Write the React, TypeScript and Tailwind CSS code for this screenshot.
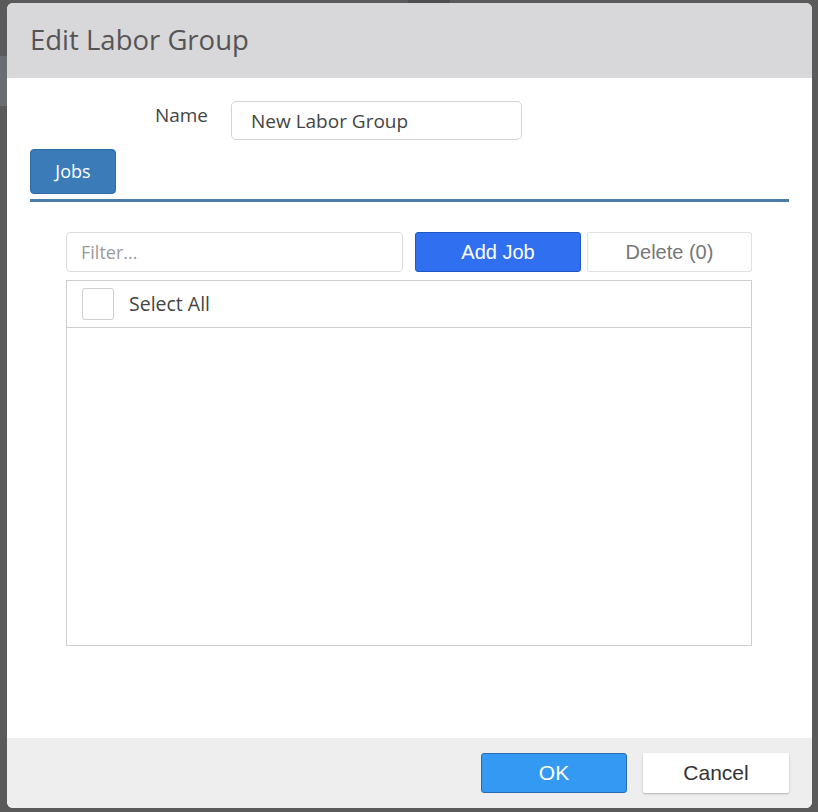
import React from "react"

const openSans = "font-['Open_Sans','Noto_Sans',sans-serif]"
const arial = "font-['Liberation_Sans',Arial,sans-serif]"

export default function App() {
  const [name, setName] = React.useState("New Labor Group")
  const [filter, setFilter] = React.useState("")
  const [all, setAll] = React.useState(false)

  return (
    <div className="relative w-[818px] h-[812px] bg-[#5a5a5a] pt-[3px] pl-[7px] overflow-hidden">
      {/* bits of the page behind the overlay */}
      <div className="absolute left-0 top-[56px] w-[7px] h-[50px] bg-[#6a6e72]" />
      <div className="absolute left-[408px] top-0 w-[42px] h-[3px] bg-[#4e4e4e]" />

      <div className={`w-[805px] h-[805px] bg-white rounded-[6px] flex flex-col overflow-hidden ${openSans}`}>
        {/* header */}
        <div className="h-[75px] shrink-0 bg-[#d8d8db] flex items-center pl-[23px]">
          <h1 className="text-[27.5px] text-[#555] leading-none -mt-[2px]">Edit Labor Group</h1>
        </div>

        {/* body */}
        <div className="flex-1 px-[23px]">
          <div className="flex items-center mt-[23px]">
            <label className="w-[178px] text-right text-[19px] text-[#444] -mt-[10px]">Name</label>
            <input
              value={name}
              onChange={(e) => setName(e.target.value)}
              className="ml-[23px] w-[291px] h-[39px] border border-[#d4d4d4] rounded-[5px] px-[19px] text-[19px] text-[#444] outline-none"
            />
          </div>

          <div className="mt-[9px]">
            <button className="w-[86px] h-[45px] bg-[#3a7bb8] border border-[#2e6aa3] rounded-[4px] text-white text-[18px]">
              Jobs
            </button>
            <div className="mt-[5px] h-[3px] w-[759px] bg-[#4a7ea8]" />
          </div>

          <div className="ml-[36px] w-[686px] mt-[30px]">
            <div className="flex gap-[12px] h-[40px]">
              <input
                value={filter}
                onChange={(e) => setFilter(e.target.value)}
                placeholder="Filter..."
                className="w-[337px] h-full border border-[#dcdcdc] rounded-[4px] px-[14px] text-[18px] text-[#444] placeholder:text-[#9a9a9a] outline-none"
              />
              <button className={`w-[166px] h-full bg-[#2f6ff0] border border-[#1f56c4] rounded-[3px] text-white text-[20px] ${arial}`}>
                Add Job
              </button>
              <button className={`ml-[-6px] w-[165px] h-full bg-white border border-[#e0e0e0] rounded-[2px] text-[#777] text-[20px] ${arial}`}>
                Delete (0)
              </button>
            </div>

            <div className="mt-[8px] h-[366px] border border-[#cfcfcf]">
              <div className="h-[47px] border-b border-[#cfcfcf] flex items-center pl-[15px]">
                <button
                  onClick={() => setAll(!all)}
                  className="w-[32px] h-[32px] border border-[#cfcfcf] rounded-[3px] bg-white"
                />
                <span className="ml-[15px] text-[19.5px] text-[#444]">Select All</span>
              </div>
            </div>
          </div>
        </div>

        {/* footer */}
        <div className="h-[70px] shrink-0 bg-[#eeeeee] flex items-center justify-end gap-[16px] pr-[23px]">
          <button className={`w-[146px] h-[40px] bg-[#3399f3] border border-[#2b6cb0] rounded-[3px] text-white text-[21px] ${arial}`}>
            OK
          </button>
          <button className={`w-[146px] h-[40px] bg-white shadow-[0_1px_2px_rgba(0,0,0,0.25)] rounded-[2px] text-[#333] text-[21px] ${arial}`}>
            Cancel
          </button>
        </div>
      </div>
    </div>
  )
}
